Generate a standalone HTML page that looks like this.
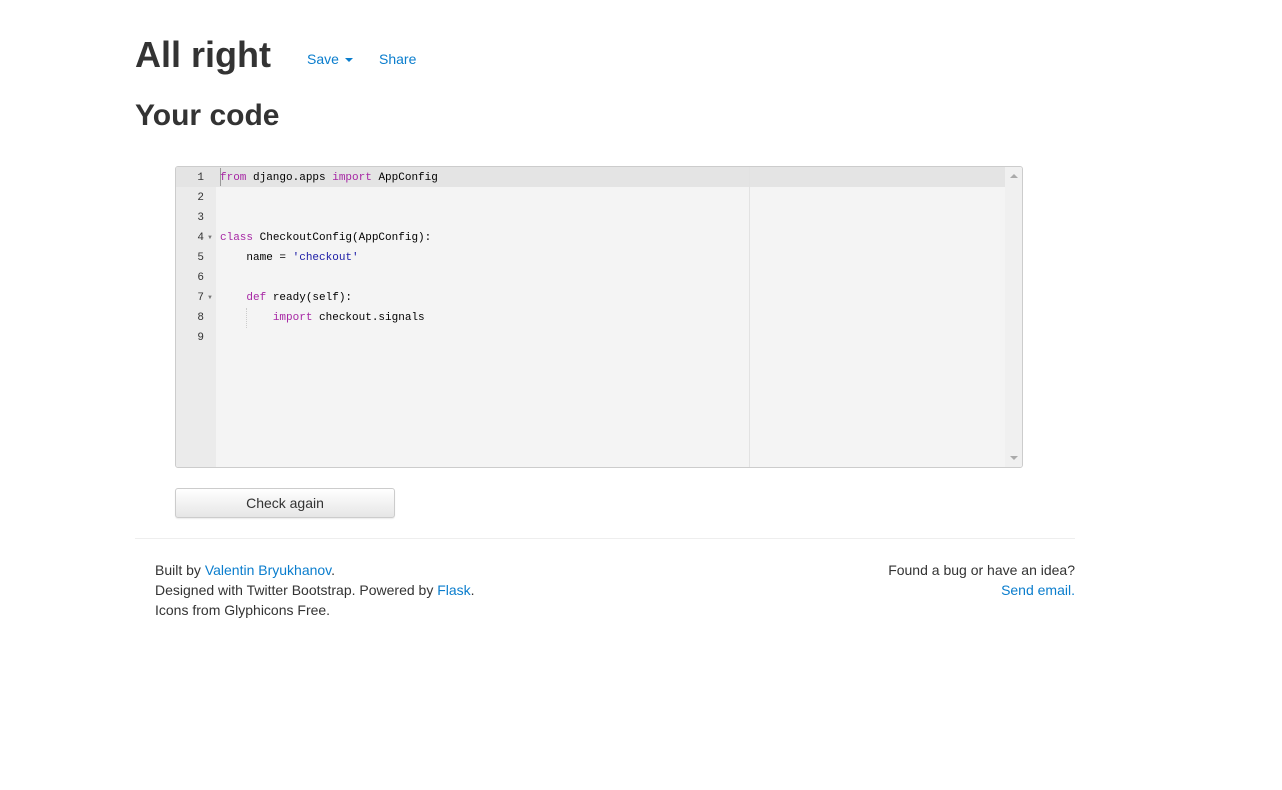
<!DOCTYPE html>
<html><head><style>
body{margin:0;background:#fff;font-family:"Liberation Sans",Arial,sans-serif;color:#333;font-size:14px;}
a{color:#0a7dcd;text-decoration:none}
.h1{position:absolute;left:135px;top:33px;font-size:36px;font-weight:bold;line-height:44px;}
.nav{position:absolute;top:51px;font-size:14px;color:#0a7dcd}
.h2{position:absolute;left:135px;top:97px;font-size:30px;font-weight:bold;line-height:38px;}
.ed{position:absolute;left:175px;top:166px;width:846px;height:300px;border:1px solid #ccc;border-radius:3px;background:#f4f4f4;overflow:hidden;}
.gut{position:absolute;left:0;top:0;width:40px;height:300px;background:#ebebeb;}
.act{position:absolute;left:0;top:0;width:829px;height:20px;background:#e4e4e4}
.pm{position:absolute;left:573px;top:0;width:1px;height:300px;background:#e2e2e2}
.sb{position:absolute;right:0;top:0;width:17px;height:300px;background:#f0f0f0}
.ln{position:absolute;left:0;width:28px;text-align:right;font-family:"Liberation Mono",monospace;font-size:11px;line-height:20px;color:#333}
.fd{position:absolute;left:31px;font-size:6px;color:#777;line-height:20px}
.cd{position:absolute;left:44px;font-family:"Liberation Mono",monospace;font-size:11px;line-height:20px;white-space:pre;color:#000}
.k{color:#a626a4}.s{color:#1a1aa6}
.btn{position:absolute;left:175px;top:488px;width:218px;height:28px;border:1px solid #ccc;border-radius:3px;background:linear-gradient(#fff,#e6e6e6);text-align:center;line-height:28px;font-size:14px;color:#333;box-shadow:0 1px 1px rgba(0,0,0,.08)}
.hr{position:absolute;left:135px;top:538px;width:940px;height:1px;background:#eee}
.fl{position:absolute;left:155px;top:560px;line-height:20px}
.fr{position:absolute;right:207px;top:560px;line-height:20px;text-align:right}
.t{position:absolute;left:0;top:1px;width:846px;height:300px}
</style></head><body>
<div class="h1">All right</div>
<div class="nav" style="left:307px">Save <span style="display:inline-block;width:0;height:0;border-left:4px solid transparent;border-right:4px solid transparent;border-top:4px solid #0a7dcd;vertical-align:middle;margin-left:2px"></span></div>
<div class="nav" style="left:379px">Share</div>
<div class="h2">Your code</div>
<div class="ed">
<div class="gut"></div>
<div class="act"></div>
<div class="pm"></div>
<div class="sb"><div style="position:absolute;left:5px;top:7px;border-left:4px solid transparent;border-right:4px solid transparent;border-bottom:4px solid #aaa"></div><div style="position:absolute;left:5px;bottom:7px;border-left:4px solid transparent;border-right:4px solid transparent;border-top:4px solid #aaa"></div></div>
<div style="position:absolute;left:44px;top:1px;width:1px;height:18px;background:#999"></div>
<div class="t">
<div style="position:absolute;left:70px;top:140px;height:20px;border-left:1px dotted #ccc"></div>
<div class="ln" style="top:0">1</div><div class="ln" style="top:20px">2</div><div class="ln" style="top:40px">3</div><div class="ln" style="top:60px">4</div><div class="ln" style="top:80px">5</div><div class="ln" style="top:100px">6</div><div class="ln" style="top:120px">7</div><div class="ln" style="top:140px">8</div><div class="ln" style="top:160px">9</div>
<div class="fd" style="top:60px">▼</div><div class="fd" style="top:120px">▼</div>
<div class="cd" style="top:0"><span class="k">from</span> django.apps <span class="k">import</span> AppConfig</div>
<div class="cd" style="top:60px"><span class="k">class</span> CheckoutConfig(AppConfig):</div>
<div class="cd" style="top:80px">    name = <span class="s">'checkout'</span></div>
<div class="cd" style="top:120px">    <span class="k">def</span> ready(self):</div>
<div class="cd" style="top:140px">        <span class="k">import</span> checkout.signals</div>
</div>
</div>
<div class="btn">Check again</div>
<div class="hr"></div>
<div class="fl">Built by <a>Valentin Bryukhanov</a>.<br>Designed with Twitter Bootstrap. Powered by <a>Flask</a>.<br>Icons from Glyphicons Free.</div>
<div class="fr">Found a bug or have an idea?<br><a>Send email.</a></div>
</body></html>
